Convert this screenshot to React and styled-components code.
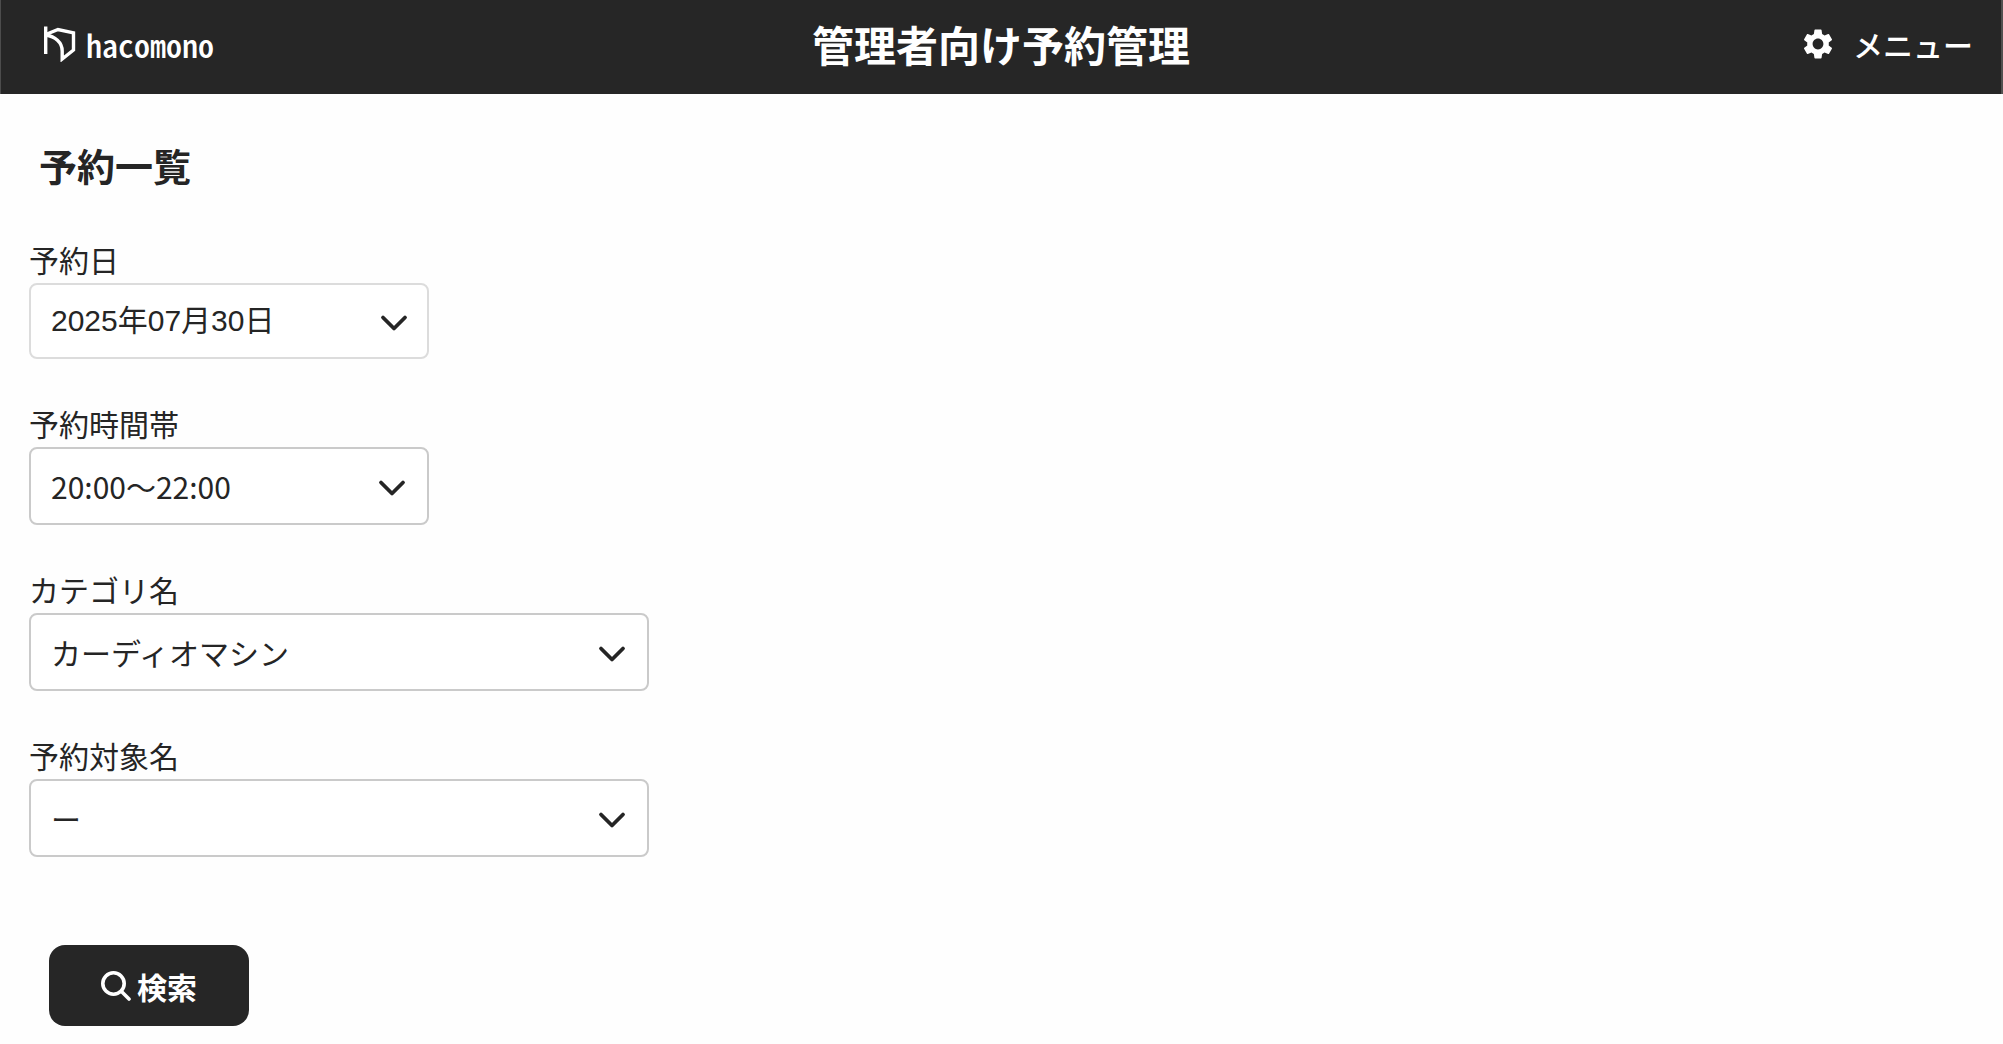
import React, { useState } from "react";
import styled, { createGlobalStyle } from "styled-components";
import { MdSettings } from "react-icons/md";

const GlobalStyle = createGlobalStyle`
  *, *::before, *::after { box-sizing: border-box; }
  body {
    margin: 0;
    background: #fefefe;
    color: #252525;
    font-family: "Noto Sans CJK JP", sans-serif;
    font-size: 30px;
    line-height: 44px;
  }
`;

const Header = styled.header`
  display: grid;
  grid-template-columns: 1fr auto 1fr;
  align-items: center;
  height: 94px;
  padding: 0 28px 6px;
  background: #262626;
  color: #fff;
  border-left: 1px solid #4c4c4c;
  border-right: 2px solid #505050;
`;

const LogoLink = styled.a`
  justify-self: start;
  display: flex;
  align-items: center;
  gap: 10px;
  padding-left: 15px;
  color: inherit;
  text-decoration: none;
`;

const Wordmark = styled.span`
  font-family: "Noto Sans CJK JP", sans-serif;
  font-feature-settings: "hwid";
  font-size: 32px;
  font-weight: 500;
  line-height: 36px;
`;

const HeaderTitle = styled.h1`
  margin: 0;
  font-size: 42px;
  line-height: 60px;
  font-weight: 700;
`;

const MenuButton = styled.button`
  justify-self: end;
  display: flex;
  align-items: center;
  gap: 17px;
  padding: 0;
  border: 0;
  background: none;
  color: inherit;
  font: inherit;
  font-weight: 500;
  cursor: pointer;
`;

const Main = styled.main`
  padding: 42px 29px;
`;

const PageTitle = styled.h2`
  margin: 0 0 44px;
  padding-left: 10px;
  font-size: 38px;
  line-height: 58px;
  font-weight: 700;
`;

const Form = styled.form`
  display: flex;
  flex-direction: column;
  align-items: flex-start;
  gap: 43px;
`;

const FieldBox = styled.div`
  width: ${(p) => (p.$wide ? 620 : 400)}px;
  max-width: 100%;
`;

const Label = styled.label`
  display: block;
  padding-bottom: 3px;
  line-height: 42px;
`;

const Control = styled.div`
  display: grid;
  align-items: center;
  > * { grid-area: 1 / 1; }
`;

const Select = styled.select`
  appearance: none;
  width: 100%;
  height: ${(p) => (p.$date ? 76 : 78)}px;
  padding: 0 60px 0 20px;
  border: 2px solid ${(p) => (p.$date ? "#dcdcdc" : "#cacaca")};
  border-radius: 8px;
  background: #fff;
  color: inherit;
  font: inherit;
  font-family: ${(p) => (p.$date ? '"Liberation Sans", ' : "")}"Noto Sans CJK JP", sans-serif;
`;

const Chevron = styled.svg`
  justify-self: end;
  margin-top: 3px;
  margin-right: ${(p) => (p.$date ? 21 : 23)}px;
  pointer-events: none;
`;

const SearchButton = styled.button`
  display: flex;
  align-items: center;
  justify-content: center;
  gap: 6px;
  width: 200px;
  height: 81px;
  margin: 45px 20px 0;
  border: 0;
  border-radius: 16px;
  background: #262626;
  color: #fff;
  font: inherit;
  font-weight: 700;
  cursor: pointer;
`;

const LogoMark = () => (
  <svg width="32" height="36" viewBox="0 0 32 36" fill="none" stroke="#fff" strokeWidth="3.4" aria-hidden="true">
    <path d="M1.7 0.500V28" />
    <path d="M1.7 8.500L14 3.500L29.500 6.800V24L18.200 33V25C18.200 16 11 10.500 1.700 9" />
  </svg>
);

const SearchIcon = () => (
  <svg width="30" height="30" viewBox="0 0 30 30" fill="none" stroke="#fff" strokeWidth="3.6" strokeLinecap="round" aria-hidden="true">
    <circle cx="12.500" cy="12.500" r="10.700" />
    <path d="M20.500 20.500L28 28" />
  </svg>
);

const Field = ({ id, label, options, date, wide }) => {
  const [value, setValue] = useState(options[0]);
  return (
    <FieldBox $wide={wide}>
      <Label htmlFor={id}>{label}</Label>
      <Control>
        <Select id={id} $date={date} value={value} onChange={(e) => setValue(e.target.value)}>
          {options.map((o) => <option key={o}>{o}</option>)}
        </Select>
        <Chevron $date={date} width="28" height="18" viewBox="0 0 28 18" fill="none" stroke="#252525" strokeWidth="3.8" strokeLinecap="round" strokeLinejoin="round" aria-hidden="true">
          <path d="M3 3.500L14 14.500L25 3.500" />
        </Chevron>
      </Control>
    </FieldBox>
  );
};

export default function App() {
  return (
    <>
      <GlobalStyle />
      <Header>
        <LogoLink href="#"><LogoMark /><Wordmark>hacomono</Wordmark></LogoLink>
        <HeaderTitle>管理者向け予約管理</HeaderTitle>
        <MenuButton type="button"><MdSettings size={36} />メニュー</MenuButton>
      </Header>
      <Main>
        <PageTitle>予約一覧</PageTitle>
        <Form onSubmit={(e) => e.preventDefault()}>
          <Field id="date" label="予約日" date options={["2025年07月30日"]} />
          <Field id="time" label="予約時間帯" options={["20:00〜22:00"]} />
          <Field id="category" label="カテゴリ名" wide options={["カーディオマシン"]} />
          <Field id="target" label="予約対象名" wide options={["ー"]} />
          <SearchButton type="submit"><SearchIcon />検索</SearchButton>
        </Form>
      </Main>
    </>
  );
}
